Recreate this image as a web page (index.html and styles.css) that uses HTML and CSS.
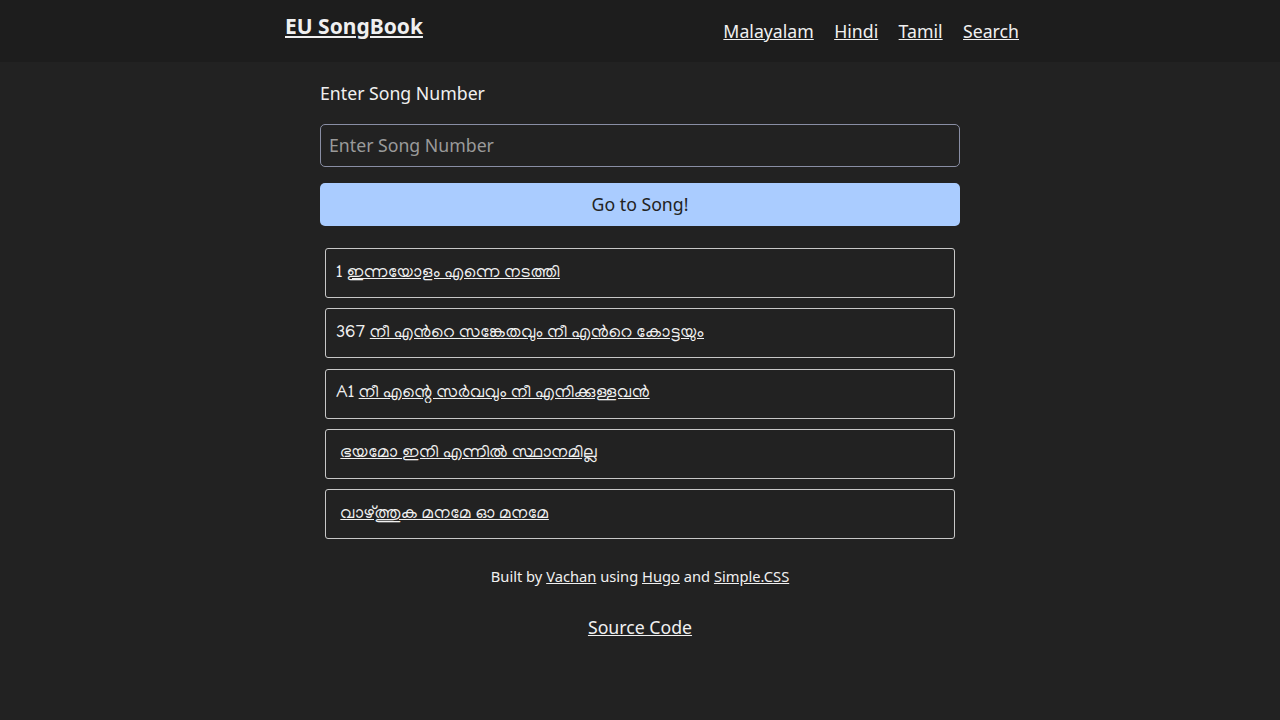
FILE: index.html
```html
<!DOCTYPE html>
<html lang="ml">
<head>
<meta charset="utf-8">
<title>EU SongBook</title>
<link rel="stylesheet" href="styles.css">
</head>
<body>
<header class="site-header">
  <div class="header-inner">
    <a class="brand" href="#">EU SongBook</a>
    <nav class="nav">
      <a href="#">Malayalam</a>
      <a href="#">Hindi</a>
      <a href="#">Tamil</a>
      <a href="#">Search</a>
    </nav>
  </div>
</header>
<main class="main">
  <label class="label" for="num">Enter Song Number</label>
  <input class="num-input" id="num" type="text" placeholder="Enter Song Number">
  <button class="go-btn" type="button">Go to Song!</button>
  <ul class="songs">
    <li class="song">1 <a href="#">ഇന്നയോളം എന്നെ നടത്തി</a></li>
    <li class="song">367 <a href="#">നീ എൻറെ സങ്കേതവും നീ എൻറെ കോട്ടയും</a></li>
    <li class="song">A1 <a href="#">നീ എന്റെ സർവവും നീ എനിക്കുള്ളവൻ</a></li>
    <li class="song">&nbsp;<a href="#">ഭയമോ ഇനി എന്നിൽ സ്ഥാനമില്ല</a></li>
    <li class="song">&nbsp;<a href="#">വാഴ്ത്തുക മനമേ ഓ മനമേ</a></li>
  </ul>
</main>
<footer class="footer">
  <p class="credits">Built by <a href="#">Vachan</a> using <a href="#">Hugo</a> and <a href="#">Simple.CSS</a></p>
  <p class="source"><a href="#">Source Code</a></p>
</footer>
</body>
</html>
```
FILE: styles.css
```css
html, body {
  margin: 0;
  padding: 0;
}
body {
  background: #222222;
  color: #f0f0f0;
  font-family: "Noto Sans", "Manjari", "Meera", "Lohit Malayalam", "Noto Sans Malayalam", "DejaVu Sans", sans-serif;
  font-size: 17.7px;
}
a {
  color: #f0f0f0;
}
.site-header {
  background: #1d1d1d;
  height: 62px;
}
.header-inner {
  width: 758px;
  margin: 0 auto;
  padding-left: 24px;
  box-sizing: border-box;
  display: flex;
  justify-content: space-between;
  align-items: flex-start;
}
.brand {
  font-size: 21px;
  font-weight: 700;
  margin-top: 11px;
  line-height: 30px;
}
.nav {
  display: flex;
  gap: 20.4px;
  margin-top: 17px;
  line-height: 28px;
}
.main {
  width: 640px;
  margin: 0 auto;
  padding-top: 18px;
  display: flex;
  flex-direction: column;
}
.label {
  line-height: 26px;
}
.num-input {
  margin-top: 18px;
  height: 43px;
  box-sizing: border-box;
  border: 1px solid #898ea4;
  border-radius: 5px;
  background: #222222;
  color: #f0f0f0;
  font: inherit;
  padding: 0 8px 2px;
}
.num-input::placeholder {
  color: #9a9a9a;
}
.go-btn {
  margin-top: 16px;
  height: 43px;
  border: none;
  border-radius: 5px;
  background: #aaccff;
  color: #222222;
  font: inherit;
  padding: 0 0 2px;
}
.songs {
  list-style: none;
  margin: 22px 5px 0;
  padding: 0;
  display: flex;
  flex-direction: column;
  gap: 10.25px;
}
.song {
  height: 50px;
  box-sizing: border-box;
  border: 1px solid #c8c8c8;
  border-radius: 3px;
  padding: 0 10px;
  display: flex;
  align-items: center;
  font-family: "Manjari", "Meera", "Noto Sans", sans-serif;
  font-size: 17.7px;
  white-space: pre;
}
.footer {
  text-align: center;
  margin-top: 25px;
}
.credits {
  font-size: 14.7px;
  margin: 0;
  line-height: 24px;
}
.source {
  margin: 25px 0 0;
  line-height: 28px;
}
```
